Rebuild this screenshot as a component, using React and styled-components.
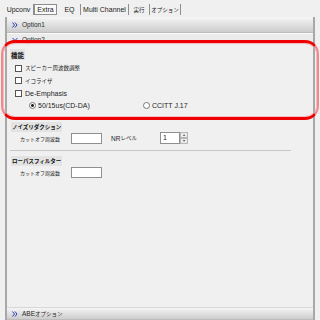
import styled, { createGlobalStyle } from 'styled-components';

const Global = createGlobalStyle`
	html, body {
		margin: 0;
		padding: 0;
		background: #f0f0f0;
	}
	body {
		font-family: 'Liberation Sans', 'Noto Sans CJK JP', sans-serif;
		color: #1e1e1e;
	}
`;

const tabs = [
	{ label: 'Upconv', w: 30 },
	{ label: 'Extra', w: 23, active: true },
	{ label: 'EQ', w: 22 },
	{ label: 'Multi Channel', w: 48 },
	{ label: '実行', w: 21, jp: true },
	{ label: 'オプション', w: 31, jp: true },
];

const Chevron = ({ down }) => (
	<svg width="6" height="6" viewBox="0 0 6 6">
		{down ? (
			<path d="M0.5 1 L3 3.5 L5.5 1 M0.5 3 L3 5.5 L5.5 3" stroke="#2d3fb5" strokeWidth="1" fill="none" />
		) : (
			<path d="M0.5 0.5 L2.5 3 L0.5 5.5 M3 0.5 L5 3 L3 5.5" stroke="#2d3fb5" strokeWidth="1" fill="none" />
		)}
	</svg>
);

const App = () => {
	return (
		<Screen>
			<Global />
			<TabBar>
				{tabs.map(t => (
					<Tab key={t.label} w={t.w} active={t.active ? 'true' : 'false'}>
						{t.jp ? <Jp>{t.label}</Jp> : t.label}
					</Tab>
				))}
			</TabBar>
			<Frame>
				<BarHeader>
					<Chevron />
					<span>Option1</span>
				</BarHeader>
				<OpenHeader>
					<Chevron down />
					<span>Option2</span>
				</OpenHeader>

				<Group>
					<Heading big="true">機能</Heading>
					<CheckRow>
						<Box />
						<Jp>スピーカー周波数調整</Jp>
					</CheckRow>
					<CheckRow>
						<Box />
						<Jp>イコライザ</Jp>
					</CheckRow>
					<CheckRow>
						<Box />
						<span>De-Emphasis</span>
					</CheckRow>
					<RadioRow>
						<RadioItem w={114}>
							<Radio checked />
							<span>50/15us(CD-DA)</span>
						</RadioItem>
						<RadioItem>
							<Radio />
							<span>CCITT J.17</span>
						</RadioItem>
					</RadioRow>
				</Group>

				<Section>
					<Heading>ノイズリダクション</Heading>
					<FieldRow>
						<Label>カットオフ周波数</Label>
						<Input />
						<Label2>
							NR<Jp>レベル</Jp>
						</Label2>
						<Spin>
							<SpinInput>1</SpinInput>
							<SpinBtns>
								<SpinBtn>▴</SpinBtn>
								<SpinBtn>▾</SpinBtn>
							</SpinBtns>
						</Spin>
					</FieldRow>
				</Section>
				<Separator />
				<Section>
					<Heading>ローパスフィルター</Heading>
					<FieldRow>
						<Label>カットオフ周波数</Label>
						<Input />
					</FieldRow>
				</Section>

				<Filler />
				<BarHeader bottom="true">
					<Chevron />
					<span>
						ABE<Jp>オプション</Jp>
					</span>
				</BarHeader>
			</Frame>
			<Annotation />
		</Screen>
	);
};

export default App;

const Screen = styled.div`
	position: relative;
	width: 320px;
	height: 320px;
	overflow: hidden;
	display: flex;
	flex-direction: column;
	font-size: 7px;
`;
const TabBar = styled.div`
	height: 17px;
	flex: none;
	display: flex;
	align-items: center;
	padding-left: 4px;
	background: #f0f0f0;
`;
const Tab = styled.div`
	width: ${props => props.w}px;
	height: 11px;
	margin-top: 2px;
	display: flex;
	align-items: center;
	justify-content: center;
	box-sizing: border-box;
	border-right: 1px solid #8e8e8e;
	font-size: 7px;
	color: #222;
	${props =>
		props.active === 'true' &&
		`
		border: 1px solid #8e8e8e;
		background: #fafafa;
		margin-right: 2px;
	`}
`;
const Jp = styled.span`
	font-size: 5.5px;
	font-family: 'Noto Sans CJK JP', sans-serif;
`;
const Frame = styled.div`
	flex: 1;
	margin-left: 5px;
	width: 310px;
	box-sizing: border-box;
	border-left: 2px solid #a8a8a8;
	border-right: 2px solid #a8a8a8;
	display: flex;
	flex-direction: column;
	min-height: 0;
`;
const BarHeader = styled.div`
	height: ${props => (props.bottom === 'true' ? 11 : 15)}px;
	flex: none;
	display: flex;
	align-items: center;
	gap: 4px;
	padding-left: 5px;
	background: linear-gradient(#f6f6f6, #e2e2e2 45%, #cdcdcd);
	border-bottom: 1px solid #bdbdbd;
	border-top: ${props => (props.bottom === 'true' ? '1px solid #d8d8d8' : 'none')};
	font-size: 6.5px;
	color: #2a2a2a;
`;
const OpenHeader = styled.div`
	height: 11px;
	flex: none;
	display: flex;
	align-items: center;
	gap: 4px;
	padding-left: 5px;
	background: #ebebeb;
	border-top: 1px solid #fafafa;
	font-size: 6.5px;
	color: #2a2a2a;
`;
const Group = styled.div`
	height: 74px;
	flex: none;
	box-sizing: border-box;
	padding: 4px 0 0 3px;
	display: flex;
	flex-direction: column;
`;
const Heading = styled.div`
	align-self: flex-start;
	height: ${props => (props.big === 'true' ? 11 : 10)}px;
	display: flex;
	align-items: center;
	padding: 0 1px;
	margin-bottom: ${props => (props.big === 'true' ? 2 : 0)}px;
	background: #e3e3e3;
	font-weight: bold;
	font-family: 'Noto Sans CJK JP', sans-serif;
	font-size: ${props => (props.big === 'true' ? 6.5 : 5.5)}px;
	color: #111;
`;
const CheckRow = styled.div`
	height: 12.5px;
	display: flex;
	align-items: center;
	gap: 3px;
	padding-left: 5px;
`;
const Box = styled.span`
	width: 5px;
	height: 5px;
	border: 1px solid #555;
	background: #fff;
`;
const RadioRow = styled.div`
	height: 12px;
	display: flex;
	align-items: center;
	padding-left: 19px;
`;
const RadioItem = styled.div`
	width: ${props => (props.w ? `${props.w}px` : 'auto')};
	display: flex;
	align-items: center;
	gap: 2px;
`;
const Radio = styled.span`
	width: 5px;
	height: 5px;
	border-radius: 50%;
	border: 1px solid #777;
	background: ${props => (props.checked ? 'radial-gradient(#222 35%, #fff 45%)' : '#fff')};
`;
const Section = styled.div`
	flex: none;
	display: flex;
	flex-direction: column;
	padding: 3px 0 0 4px;
`;
const FieldRow = styled.div`
	height: 12px;
	display: flex;
	align-items: center;
	padding-left: 9px;
`;
const Label = styled.span`
	width: 51px;
	font-size: 5px;
	font-family: 'Noto Sans CJK JP', sans-serif;
	color: #222;
`;
const Input = styled.div`
	width: 31px;
	height: 11px;
	box-sizing: border-box;
	border: 1px solid #8f8f8f;
	background: #fff;
`;
const Label2 = styled.span`
	margin-left: 9px;
	width: 49px;
	display: flex;
	align-items: center;
	font-size: 6.5px;
`;
const Spin = styled.div`
	display: flex;
	height: 12px;
`;
const SpinInput = styled.div`
	width: 20px;
	box-sizing: border-box;
	border: 1px solid #8f8f8f;
	background: #fff;
	font-size: 7px;
	padding: 1px 2px;
`;
const SpinBtns = styled.div`
	width: 8px;
	display: flex;
	flex-direction: column;
`;
const SpinBtn = styled.div`
	flex: 1;
	box-sizing: border-box;
	border: 1px solid #b5b5b5;
	background: #ececec;
	font-size: 4px;
	line-height: 4px;
	text-align: center;
	color: #555;
`;
const Separator = styled.div`
	height: 1px;
	margin: 6px 22px 2px 3px;
	background: #c7c7c7;
	flex: none;
`;
const Filler = styled.div`
	flex: 1;
`;
const Annotation = styled.div`
	position: absolute;
	top: 40px;
	left: 1px;
	right: 1px;
	height: 80px;
	box-sizing: border-box;
	border: 2px solid #f08a8a;
	border-top: 3px solid #ee0000;
	border-bottom: 3px solid #ee0000;
	border-radius: 14px;
	box-shadow: inset 0 0 0 1px rgba(245, 170, 170, 0.7);
	pointer-events: none;
`;
